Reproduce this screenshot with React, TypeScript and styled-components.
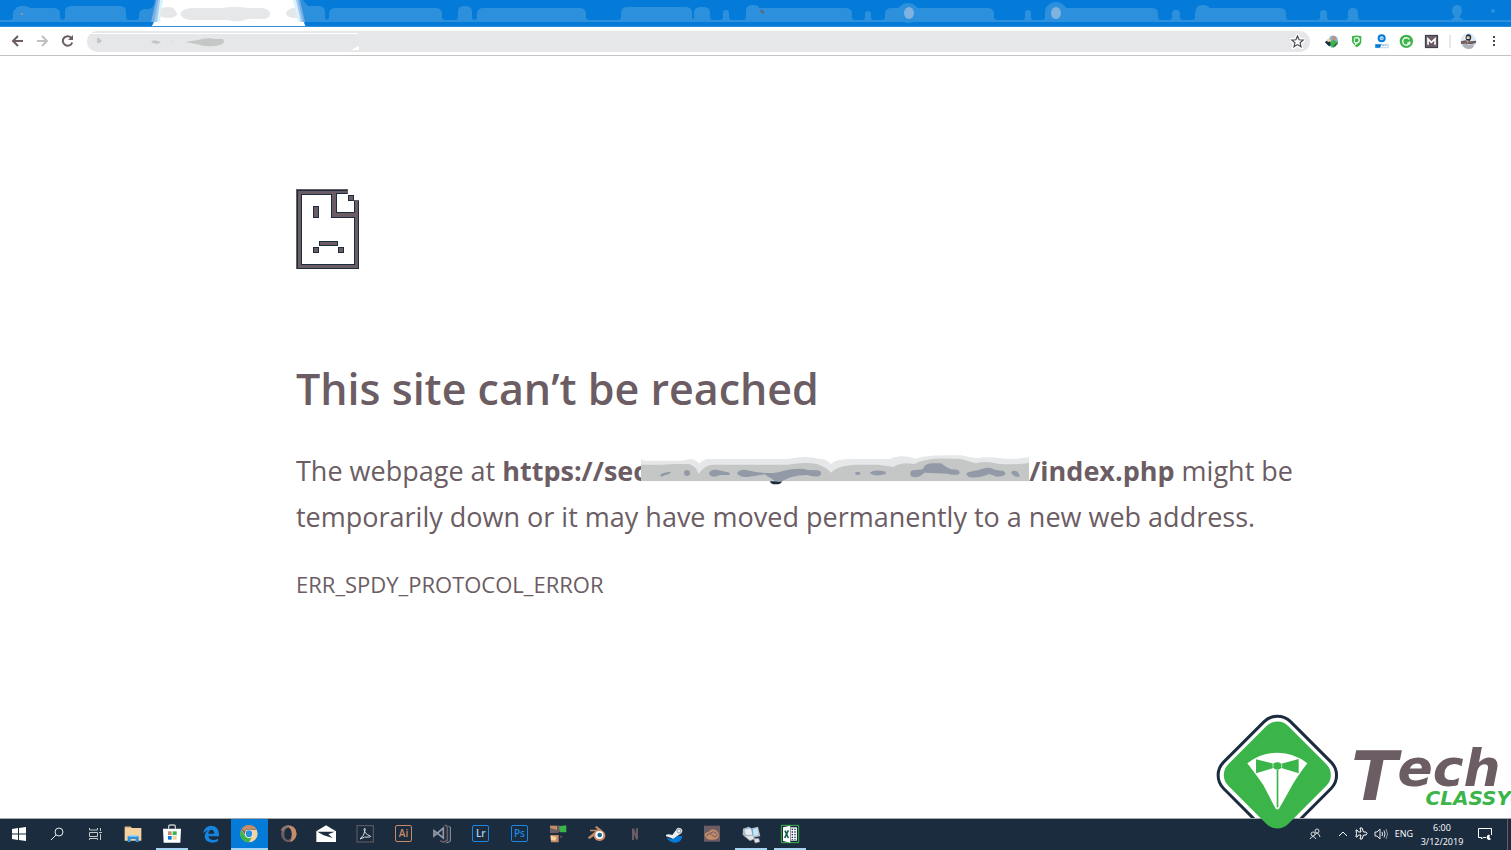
import React from 'react';
import styled, { createGlobalStyle } from 'styled-components';

const c = {
  blue: '#047bd9',
  blueSoft: '#2d90dc',
  navy: '#1b2c3f',
  brown: '#6b5d63',
  green: '#3bb54a',
  grey: '#e6e7e9',
  greyMid: '#c5c7c6',
  slate: '#929aa8',
  tan: '#c48c68',
  cream: '#f5d3a0',
  ice: '#a8d4f4',
};

const GlobalStyle = createGlobalStyle`
  *, *::before, *::after { box-sizing: border-box; }
  body { margin: 0; background: #fff; font-family: "Open Sans", "Noto Sans", sans-serif; color: ${c.brown}; }
  button { border: 0; padding: 0; background: none; font: inherit; color: inherit; }
  svg { display: block; }
`;

const Desktop = styled.div`
  position: relative;
  min-height: 100vh;
  display: flex;
  flex-direction: column;
  overflow: hidden;
`;

/* ---------- tab strip ---------- */

const TabStrip = styled.div`
  display: flex;
  height: 27px;
  background: ${c.blue};
  border-bottom: 1px solid ${c.blueSoft};
  overflow: hidden;
`;

const Tab = styled.button<{ $width: number; $active?: boolean }>`
  flex: 0 0 ${p => p.$width}px;
  height: 27px;
  position: ${p => (p.$active ? 'relative' : 'static')};
`;

const WindowControls = styled.div`
  flex: 1;
  display: flex;
  justify-content: flex-end;
  background: linear-gradient(${c.blueSoft}, ${c.blueSoft}) 0 20px / 100% 2px no-repeat;
`;

type Bump = [number, number, number];

const bumpPath = ([a, b, top]: Bump) => {
  const r = Math.min(6, (b - a) / 2);
  return `M${a - 3} 22V20Q${a} 20 ${a} 17V${top + r}Q${a} ${top} ${a + r} ${top}H${b - r}Q${b} ${top} ${b} ${top + r}V17Q${b} 20 ${b + 3} 20V22Z`;
};

interface SmudgeProps {
  from: number;
  width: number;
  bumps: Bump[];
  children?: React.ReactNode;
}

const Smudge = ({ from, width, bumps, children }: SmudgeProps) => (
  <svg width={width} height="27" viewBox={`${from} 0 ${width} 27`} aria-hidden="true">
    <g fill={c.blueSoft}>
      <rect x={from} y="20" width={width} height="2" />
      {bumps.map(b => (
        <path key={b[0]} d={bumpPath(b)} />
      ))}
    </g>
    {children}
  </svg>
);

const ActiveTabArt = () => (
  <svg width="164" height="27" viewBox="148 0 164 27" aria-hidden="true">
    <path d="M148 22V9Q154 9 155 0H163L160 22ZM293 0H303L308 6L312 6V22H297Z" fill={c.blueSoft} />
    <path d="M156 0H300L305 22H308V22H304Q304 26 307 27H150Q153 26 154 22H151Z" fill="#76aee2" />
    <path d="M158 0H298L303 22H304Q304 26 307 27H150Q153 26 154 22Z" fill="#a3c5ef" />
    <path d="M160 0H296L301 22H157Z" fill="#d5f5fc" />
    <path d="M163 0H293L298 22H304Q304 26 307 27H150Q153 26 154 22H160Z" fill="#fff" />
    <g fill={c.grey}>
      <path d="M161 9Q163 7 168 7Q174 7 176 12Q178 13 177 15Q174 18 168 18Q163 18 160 16Z" />
      <path d="M180 14Q183 8 192 8H222Q235 6 248 8H262Q270 9 270 14Q270 19 262 19H248Q238 23 228 20H192Q183 20 180 14Z" />
      <path d="M286 13Q288 8 295 8L298 18Q287 19 286 13Z" />
    </g>
  </svg>
);

/* ---------- toolbar ---------- */

const Toolbar = styled.div`
  display: flex;
  align-items: center;
  height: 29px;
  padding: 0 5px;
  border-bottom: 1px solid #c3c3c5;
  background: #fff;
`;

const ToolButton = styled.button`
  flex: 0 0 25px;
  height: 25px;
  display: grid;
  place-items: center;
`;

const Omnibox = styled.div`
  flex: 1;
  display: flex;
  align-items: center;
  height: 21px;
  margin: 0 9px 0 7px;
  border-radius: 10px;
  background: ${c.grey};
`;

const AddressArt = styled.svg`
  flex: none;
`;

const Address = styled.input`
  flex: 1;
  min-width: 0;
  height: 21px;
  border: 0;
  outline: 0;
  background: transparent;
  font: 12px "Open Sans", sans-serif;
`;

const Divider = styled.span`
  width: 2px;
  height: 13px;
  margin: 0 5px;
  background: ${c.grey};
`;

const extensions = [
  {
    name: 'Download manager',
    art: (
      <>
        <path d="M3 24L18 11L31 25L18 38Z" fill={c.blueSoft} />
        <path d="M17 8Q28 1 38 9Q45 18 40 29L24 25Z" fill="#8fb6cf" />
        <path d="M26 6L37 11L31 20L24 15Z" fill={c.tan} />
        <path d="M3 25L14 18L24 28L15 37Z" fill={c.navy} />
        <path d="M18 23L29 18L41 24L33 38L22 41Z" fill={c.green} />
        <path d="M7 18L17 13L22 22L12 24Z" fill={c.cream} />
        <path d="M31 33L42 23L40 32L27 42Z" fill={c.navy} opacity=".65" />
      </>
    ),
  },
  {
    name: 'Privacy',
    art: (
      <>
        <path d="M9 7Q23 2 37 7V23Q36 34 22 40L17 33Q9 29 9 22Z" fill={c.green} />
        <path d="M16 13Q29 7 31 18Q31 27 20 27V33" fill="none" stroke="#fff" strokeWidth="4" />
        <path d="M16 14V27" stroke="#fff" strokeWidth="3" />
      </>
    ),
  },
  {
    name: 'Search rank',
    art: (
      <>
        <circle cx="23" cy="13" r="12" fill={c.blue} />
        <circle cx="23" cy="13" r="6" fill="#c8e3f7" />
        <path d="M20 14H27" stroke={c.blue} strokeWidth="2" />
        <path d="M4 31H43V41H4Z" fill="#fff" stroke="#9dc4ec" strokeWidth="2" />
        <path d="M4 31H23L18 41H4Z" fill={c.blue} />
        <path d="M25 35H40" stroke={c.slate} strokeWidth="3" strokeDasharray="5 2" />
      </>
    ),
  },
  {
    name: 'Grammar',
    art: (
      <>
        <circle cx="22" cy="22" r="20" fill={c.green} />
        <path d="M31 16A11 11 0 1 0 32 27H25" fill="none" stroke="#fff" strokeWidth="4" />
        <path d="M32 22V32" stroke="#fff" strokeWidth="3" />
      </>
    ),
  },
  {
    name: 'Metrics',
    art: (
      <>
        <path d="M3 3H42V42H3Z" fill={c.brown} />
        <path d="M4 4H41V41H4Z" fill="none" stroke={c.navy} strokeWidth="2" />
        <path d="M12 32V15L22 25L33 15V32" fill="none" stroke="#fff" strokeWidth="5" />
      </>
    ),
  },
];

/* ---------- error page ---------- */

const Page = styled.main`
  flex: 1;
  padding: 133px 24px 0 296px;
`;

const Message = styled.article`
  max-width: 1020px;
`;

const Title = styled.h1`
  margin: 89px 0 0;
  font-size: 43px;
  line-height: 60px;
  font-weight: 600;
`;

const Detail = styled.p`
  margin: 29px 0 0;
  font-size: 27px;
  line-height: 46px;
`;

const Url = styled.strong`
  font-weight: 700;
  white-space: nowrap;
`;

const Redacted = styled.svg`
  display: inline-block;
  vertical-align: -6px;
  margin-left: -6px;
  position: relative;
`;

const ErrorCode = styled.p`
  margin: 27px 0 0;
  font-size: 22px;
  line-height: 34px;
`;

const SadPage = () => (
  <svg width="64" height="81" viewBox="0 0 64 81" role="img" aria-label="Page error" shapeRendering="crispEdges">
    <path
      fillRule="evenodd"
      fill={c.brown}
      d="M0 0H52V5H40V23H58V11H63V80H0ZM5 5V75H58V28H35V5Z"
    />
    <path d="M5 5H35V28H58V75H5ZM51 4H40V23H58V12" fill="none" stroke={c.navy} strokeWidth="1" />
    <path d="M1 1H51M1 79H62V12M1 1V79" fill="none" stroke={c.navy} strokeWidth="1" />
    <g fill={c.brown} stroke={c.navy} strokeWidth="1">
      <path d="M52 6H57V11H52ZM17 17H22V28H17ZM23 52H41V56H23ZM17 58H22V63H17ZM42 58H47V63H42Z" />
    </g>
  </svg>
);

const RedactedHost = () => (
  <Redacted width="388" height="32" viewBox="0 0 1164 96" role="img" aria-label="hidden host name">
    <path d="M385 76Q388 86 396 88H412Q422 86 424 76Z" fill={c.navy} />
    <path d="M0 12L10 17H120L150 12Q165 14 175 26Q188 12 200 12H440Q495 0 535 11Q558 12 570 27Q585 12 630 12H748Q775 -4 825 11Q850 -2 960 1Q985 7 1010 10Q1040 3 1080 10Q1120 16 1164 5V79H0Z" fill={c.grey} />
    <path d="M0 29H60L100 27H145Q165 33 173 57Q190 29 220 29H440Q495 19 530 28Q556 37 570 53Q590 30 650 29H710Q735 32 757 36Q780 20 820 27Q855 5 960 12Q985 20 1005 25Q1035 16 1070 26Q1120 31 1164 23V78H0Z" fill={c.greyMid} />
    <g fill={c.slate}>
      <path d="M57 60Q62 53 90 50Q86 58 73 60L62 65Z" />
      <circle cx="138" cy="54" r="9" />
      <path d="M204 55Q208 42 230 45L266 53V60L238 60Q210 73 204 55ZM288 55Q296 39 325 47L350 52Q400 58 425 48Q475 36 500 45L530 46Q549 52 534 64Q510 65 500 60Q445 62 430 76Q410 88 392 71L370 58L325 65Q298 70 288 55Z" />
      <ellipse cx="650" cy="55" rx="8" ry="5" />
      <path d="M686 54Q700 42 734 50V57Q700 67 686 54ZM808 56Q808 43 824 45L845 43Q853 25 870 25H900Q915 37 930 43Q960 43 955 56Q945 63 920 56L850 53Q830 73 810 64ZM975 56Q988 48 1010 46Q1045 32 1060 44L1087 48Q1100 56 1086 63L1068 65L1045 57Q1005 73 982 65ZM1110 52Q1115 44 1130 50L1137 64Q1120 70 1110 52Z" />
    </g>
  </Redacted>
);

/* ---------- brand ---------- */

const Brand = styled.div`
  position: absolute;
  right: 0;
  bottom: 20px;
  z-index: 2;
  display: flex;
  align-items: flex-end;
  gap: 12px;
`;

const Wordmark = styled.div`
  width: 160px;
  height: 86px;
  display: flex;
  flex-direction: column;
  font-family: "DejaVu Sans", sans-serif;
  font-weight: 700;
  font-style: italic;
`;

const Tech = styled.span`
  display: flex;
  align-items: flex-start;
  height: 46px;
  font-size: 52px;
  line-height: 48px;
  color: ${c.brown};
`;

const Initial = styled.span`
  font-size: 68px;
  line-height: 65px;
`;

const Classy = styled.span`
  align-self: flex-end;
  font-size: 20px;
  line-height: 16px;
  color: ${c.green};
`;

const BrandMark = () => (
  <svg width="123" height="117" viewBox="48 39 369 351" role="img" aria-label="Tech Classy emblem">
    <clipPath id="aboveBar">
      <path d="M0 0H933V354H0Z" />
    </clipPath>
    <g clipPath="url(#aboveBar)">
      <rect x="90" y="84" width="284" height="284" rx="56" transform="rotate(45 232 226)" fill="#fff" stroke={c.navy} strokeWidth="9" />
    </g>
    <rect x="105" y="98" width="254" height="254" rx="46" transform="rotate(45 232 225)" fill={c.green} />
    <path d="M142 190Q180 158 232 158Q284 158 322 190Q295 225 277 255Q258 290 236 328H228Q208 290 190 255Q169 225 142 190Z" fill="#fff" />
    <path d="M168 178L220 191Q232 183 244 191L296 177V220L244 204Q232 214 220 204L168 220Z" fill={c.green} />
    <path d="M230 210H235V322H230Z" fill={c.green} />
    <path d="M219 192V203M245 192V203" stroke="#fff" strokeWidth="2" />
  </svg>
);

/* ---------- taskbar ---------- */

const Taskbar = styled.footer`
  display: flex;
  justify-content: space-between;
  height: 32px;
  border-top: 1px solid #a4a8ad;
  background: ${c.navy};
  color: #fff;
`;

const Launchers = styled.nav`
  display: flex;
`;

const SystemButton = styled.button`
  width: 38px;
  height: 31px;
  padding-bottom: 2px;
  display: grid;
  place-items: center;
`;

const Pinned = styled.div`
  width: 695px;
  display: grid;
  grid-template-columns: repeat(18, 1fr);
`;

const AppButton = styled.button<{ $open?: boolean; $current?: boolean }>`
  height: 31px;
  padding-bottom: 2px;
  display: grid;
  place-items: center;
  background:
    linear-gradient(${p => (p.$open ? c.ice : 'transparent')} 0 0) center bottom / ${p => (p.$current ? '37px' : '32px')} 2px no-repeat,
    linear-gradient(${p => (p.$current ? c.blue : 'transparent')} 0 0) center 0 / 37px 29px no-repeat;
`;

const AdobeTile = styled.span<{ $tone: string; $ink?: string }>`
  width: 17px;
  height: 17px;
  border: 1px solid ${p => p.$tone};
  border-radius: 2px;
  font-size: 10px;
  font-weight: 600;
  line-height: 15px;
  text-align: center;
  color: ${p => p.$ink ?? p.$tone};
`;

const Tray = styled.div`
  display: flex;
  align-items: center;
  font-size: 9px;
  padding-right: 3px;
`;

const TrayButton = styled.button<{ $width: number }>`
  width: ${p => p.$width}px;
  height: 31px;
  padding-bottom: 2px;
  display: grid;
  place-items: center;
`;

const Clock = styled.button`
  width: 50px;
  line-height: 14px;
  text-align: center;
`;

const ShowDesktop = styled.button`
  width: 1px;
  height: 31px;
  margin-left: 4px;
  background: ${c.brown};
`;

const Icon = ({ children }: { children: React.ReactNode }) => (
  <svg width="24" height="24" viewBox="0 0 72 72" fill="none" aria-hidden="true">
    {children}
  </svg>
);

const apps: { name: string; open?: boolean; current?: boolean; art: React.ReactNode }[] = [
  {
    name: 'File Explorer',
    art: (
      <Icon>
        <path d="M11 14H29L33 18H61V56H11Z" fill={c.cream} />
        <path d="M13 15H29" stroke={c.tan} strokeWidth="3" />
        <path d="M20 60V42H53V60H44V51H29V60Z" fill={c.blueSoft} />
        <path d="M23 39H50V44H23Z" fill={c.ice} />
      </Icon>
    ),
  },
  {
    name: 'Store',
    open: true,
    art: (
      <Icon>
        <path d="M26 20V13Q26 9 31 9H41Q46 9 46 13V20" stroke={c.greyMid} strokeWidth="4" />
        <path d="M9 20H63L61 62H11Z" fill="#fff" />
        <path d="M24 28H35V39H24Z" fill={c.tan} />
        <path d="M38 28H50V39H38Z" fill={c.green} />
        <path d="M24 42H35V53H24Z" fill={c.blue} />
        <path d="M38 42H50V53H38Z" fill={c.cream} />
      </Icon>
    ),
  },
  {
    name: 'Edge',
    art: (
      <Icon>
        <path d="M12 34Q17 11 37 11Q60 12 60 38V43H28Q30 54 43 54Q51 54 57 50V58Q49 62 40 62Q17 61 17 43Q17 31 30 24Q20 26 12 34ZM28 35H46Q45 23 37 23Q29 25 28 35Z" fill="#1585e0" />
      </Icon>
    ),
  },
  {
    name: 'Chrome',
    open: true,
    current: true,
    art: (
      <Icon>
        <circle cx="36" cy="35" r="26" fill={c.cream} />
        <path d="M13 23A26 26 0 0 1 59 23H36A13 13 0 0 0 25 39Z" fill={c.brown} />
        <path d="M14 21A26 26 0 0 1 58 21H36A14 14 0 0 0 24 29Z" fill={c.tan} />
        <path d="M12 24A26 26 0 0 0 36 61L45 45A13 13 0 0 1 25 42Z" fill={c.green} />
        <circle cx="36" cy="35" r="12" fill="#fff" />
        <circle cx="36" cy="35" r="10" fill={c.blueSoft} />
      </Icon>
    ),
  },
  {
    name: 'Opera',
    art: (
      <Icon>
        <path d="M36 10A26 26 0 0 0 36 61A26 26 0 0 0 36 10M36 17Q47 20 47 36Q47 52 36 54Q25 52 25 36Q25 20 36 17Z" fill={c.brown} fillRule="evenodd" />
        <path d="M32 10Q62 10 62 37Q60 54 42 61Q48 52 48 36Q48 20 32 10Z" fill={c.tan} />
        <path d="M14 25Q20 11 36 10V17Q25 17 23 29Z" fill="#8d7771" />
      </Icon>
    ),
  },
  {
    name: 'Mail',
    art: (
      <Icon>
        <path d="M7 28L36 10L66 28V60H7Z" fill="#fff" />
        <path d="M10 29H62L43 37L56 48L29 40Z" fill={c.navy} />
      </Icon>
    ),
  },
  {
    name: 'Acrobat',
    art: (
      <Icon>
        <rect x="12" y="11" width="49" height="49" stroke={c.brown} strokeWidth="3" />
        <path d="M21 51Q34 42 37 22Q37 17 33 21Q34 36 52 42Q56 44 49 45Q34 43 21 51Z" stroke="#d8d9db" strokeWidth="3" />
      </Icon>
    ),
  },
  { name: 'Illustrator', art: <AdobeTile $tone={c.tan}>Ai</AdobeTile> },
  {
    name: 'Visual Studio',
    art: (
      <Icon>
        <path d="M12 26L40 48V18L12 42Z" stroke={c.slate} strokeWidth="5" />
        <path d="M44 9L52 13V55L42 60L30 57" stroke={c.brown} strokeWidth="5" />
        <path d="M56 13L61 15V58L49 63" stroke={c.slate} strokeWidth="3" />
      </Icon>
    ),
  },
  { name: 'Lightroom', art: <AdobeTile $tone="#1a88e4" $ink={c.ice}>Lr</AdobeTile> },
  { name: 'Photoshop', art: <AdobeTile $tone="#1a88e4">Ps</AdobeTile> },
  {
    name: 'Launcher',
    art: (
      <Icon>
        <path d="M12 11H34V33H12Z" fill={c.tan} />
        <path d="M12 18L34 24V33H12Z" fill={c.brown} />
        <path d="M34 11H42V29L34 34Z" fill={c.brown} />
        <path d="M39 13L61 10V31H43Z" fill={c.green} />
        <path d="M13 39H38V61H15Z" fill={c.tan} />
        <path d="M14 41L32 45L28 56L15 54Z" fill={c.cream} />
        <path d="M42 43H48L44 49" stroke={c.brown} strokeWidth="3" />
      </Icon>
    ),
  },
  {
    name: 'Blender',
    art: (
      <Icon>
        <path d="M8 47L31 28H15V23H38L30 15L35 12Q47 21 57 30Q65 39 58 50Q47 62 32 53Q27 48 26 43L13 51Z" fill={c.tan} />
        <circle cx="43" cy="39" r="12" fill="#fff" />
        <circle cx="44" cy="39" r="7" fill="#156597" />
      </Icon>
    ),
  },
  {
    name: 'Notes',
    art: (
      <Icon>
        <path d="M30 54V20L42 52V19" stroke={c.brown} strokeWidth="6" />
      </Icon>
    ),
  },
  {
    name: 'Steam',
    art: (
      <Icon>
        <path d="M14 48Q36 54 44 43L61 42Q59 62 38 62Q23 61 14 48Z" fill={c.blue} />
        <path d="M12 39Q17 34 31 39L42 24Q46 14 56 19Q65 25 58 34L40 46Q35 53 28 48L12 43Z" fill="#edf0f3" />
        <circle cx="51" cy="27" r="6" stroke={c.slate} strokeWidth="3" />
      </Icon>
    ),
  },
  {
    name: 'Creative Cloud',
    art: (
      <Icon>
        <path d="M12 11H60V59H12Z" fill={c.brown} />
        <path d="M15 43Q12 31 25 30Q36 15 51 27Q61 37 54 48Q42 58 20 50Z" fill={c.tan} />
        <path d="M21 43Q20 33 33 36L45 45Q55 43 49 34Q40 25 31 33" stroke={c.brown} strokeWidth="3" />
      </Icon>
    ),
  },
  {
    name: 'Remote tools',
    open: true,
    art: (
      <Icon>
        <path d="M12 20L29 14L38 19L57 14L64 43L48 46L31 52L11 39Z" fill="#b2bcc7" />
        <path d="M17 24L35 19L40 40L21 38Z" fill="#e5edf3" />
        <path d="M39 23L56 18L58 38L43 42Z" fill="#cce4f5" />
        <path d="M16 42L41 39L47 50L33 56ZM44 51L59 49L62 59L49 63Z" fill="#dfe3e6" stroke={c.slate} strokeWidth="2" />
        <path d="M32 17L40 22L42 38" stroke={c.blueSoft} strokeWidth="2" />
      </Icon>
    ),
  },
  {
    name: 'Excel',
    open: true,
    art: (
      <Icon>
        <path d="M10 10H62V62H10Z" stroke={c.green} strokeWidth="3" />
        <path d="M15 16L37 11V62L15 57Z" fill="#fff" />
        <path d="M38 16H57V56H38Z" fill="#f1f4f5" />
        <path d="M21 26L31 48M31 25L20 48" stroke="#165f4f" strokeWidth="5" />
        <path d="M43 20V54M51 20V54" stroke={c.navy} strokeWidth="4" strokeDasharray="4 4" />
      </Icon>
    ),
  },
];

export default function App() {
  return (
    <Desktop>
      <GlobalStyle />
      <TabStrip role="tablist" aria-label="Open tabs">
        <Tab role="tab" $width={148} aria-label="Tab 1">
          <Smudge from={0} width={148} bumps={[[13, 60, 8], [15, 31, 6], [65, 126, 6], [139, 156, 9]]}>
            <rect x="21" y="13" width="2" height="2" fill={c.slate} />
          </Smudge>
        </Tab>
        <Tab role="tab" aria-selected="true" $width={164} $active aria-label="Current tab">
          <ActiveTabArt />
        </Tab>
        <Tab role="tab" $width={139} aria-label="Tab 3">
          <Smudge from={312} width={139} bumps={[[305, 325, 6], [329, 442, 8]]} />
        </Tab>
        <Tab role="tab" $width={147} aria-label="Tab 4">
          <Smudge from={451} width={147} bumps={[[458, 472, 6], [477, 586, 8]]} />
        </Tab>
        <Tab role="tab" $width={144} aria-label="Tab 5">
          <Smudge from={598} width={144} bumps={[[621, 692, 7], [694, 710, 7], [723, 729, 10]]} />
        </Tab>
        <Tab role="tab" $width={138} aria-label="Tab 6">
          <Smudge from={742} width={138} bumps={[[746, 760, 5], [750, 852, 8], [865, 871, 11]]}>
            <path d="M760 10H762L764 12V14L761 12Z" fill={c.brown} />
          </Smudge>
        </Tab>
        <Tab role="tab" $width={160} aria-label="Tab 7">
          <Smudge from={880} width={160} bumps={[[885, 994, 8], [1025, 1031, 10]]}>
            <ellipse cx="895" cy="14" rx="10" ry="6" fill={c.blueSoft} />
            <ellipse cx="908" cy="13" rx="11" ry="10" fill={c.blueSoft} />
            <ellipse cx="909" cy="13" rx="5" ry="6" fill="#80b2df" />
          </Smudge>
        </Tab>
        <Tab role="tab" $width={148} aria-label="Tab 8">
          <Smudge from={1040} width={148} bumps={[[1045, 1158, 8], [1172, 1180, 10]]}>
            <ellipse cx="1056" cy="12" rx="11" ry="10" fill={c.blueSoft} />
            <ellipse cx="1056" cy="13" rx="5" ry="6" fill="#80b2df" />
          </Smudge>
        </Tab>
        <Tab role="tab" $width={180} aria-label="Tab 9">
          <Smudge from={1188} width={180} bumps={[[1195, 1286, 8], [1196, 1210, 5], [1320, 1327, 10], [1348, 1358, 8]]} />
        </Tab>
        <WindowControls>
          <svg width="143" height="27" viewBox="1368 0 143 27" aria-hidden="true">
            <path d="M1452 11Q1452 5 1457 5Q1462 5 1462 11Q1462 14 1459 17L1464 20H1450L1455 17Q1452 14 1452 11Z" fill={c.blueSoft} />
            <circle cx="1493" cy="11" r="2" fill={c.blueSoft} />
          </svg>
        </WindowControls>
      </TabStrip>

      <Toolbar>
        <ToolButton aria-label="Back">
          <svg width="13" height="13" viewBox="0 0 13 13" fill="none" stroke={c.brown} strokeWidth="2">
            <path d="M12 6H2M7 1L2 6L7 11" />
          </svg>
        </ToolButton>
        <ToolButton aria-label="Forward">
          <svg width="13" height="13" viewBox="0 0 13 13" fill="none" stroke="#bfc0c2" strokeWidth="2">
            <path d="M1 6H11M6 1L11 6L6 11" />
          </svg>
        </ToolButton>
        <ToolButton aria-label="Reload">
          <svg width="13" height="13" viewBox="0 0 13 13" fill="none">
            <path d="M10 2.500A4.800 4.800 0 1 0 11.200 7.500" stroke={c.brown} strokeWidth="2" />
            <path d="M12 0V5H7Z" fill={c.brown} />
          </svg>
        </ToolButton>
        <Omnibox>
          <AddressArt width="273" height="21" viewBox="0 0 273 21" aria-hidden="true">
            <path d="M2 2.500H271" stroke="#fff" />
            <path d="M264 19L268 17L272 15V19Z" fill="#fff" />
            <g fill={c.greyMid}>
              <path d="M10 7L12 7L15 10L13 12H10Z" />
              <path d="M64 11Q66 8 71 10L74 11L71 13Q67 13 64 11ZM98 11L111 9Q119 6 128 8H136Q139 12 133 14Q121 17 109 13Z" />
              <circle cx="85" cy="11" r=".6" />
            </g>
          </AddressArt>
          <Address aria-label="Address" />
          <ToolButton aria-label="Bookmark this page">
            <svg width="15" height="15" viewBox="0 0 15 15">
              <path d="M7.500 2L9.100 5.800L13.200 6.100L10.100 8.800L11 12.800L7.500 10.600L4 12.800L4.900 8.800L1.800 6.100L5.900 5.800Z" fill="#fff" stroke="#fff" strokeWidth="4" />
              <path d="M7.500 2L9.100 5.800L13.200 6.100L10.100 8.800L11 12.800L7.500 10.600L4 12.800L4.900 8.800L1.800 6.100L5.900 5.800Z" fill="#fff" stroke="#4b4650" strokeWidth="1.200" />
            </svg>
          </ToolButton>
        </Omnibox>
        {extensions.map(e => (
          <ToolButton key={e.name} aria-label={e.name}>
            <svg width="15" height="15" viewBox="0 0 45 45">{e.art}</svg>
          </ToolButton>
        ))}
        <Divider />
        <ToolButton aria-label="Profile">
          <svg width="17" height="17" viewBox="0 0 51 51">
            <circle cx="25" cy="25" r="24" fill="#dcebf4" />
            <path d="M17 16Q16 3 27 4Q36 6 33 18L29 24L19 22Z" fill={c.navy} />
            <path d="M20 10H29V18H20Z" fill={c.cream} />
            <path d="M3 25L17 22L31 25L48 23V30L33 34L15 32L3 33Z" fill={c.brown} />
            <path d="M7 34Q17 29 26 36L42 33L38 44Q25 53 12 43Z" fill="#adb1b7" />
            <path d="M18 24L22 31L29 24" fill={c.tan} />
          </svg>
        </ToolButton>
        <ToolButton aria-label="Menu">
          <svg width="4" height="12" viewBox="0 0 4 12" fill="#4b4650">
            <path d="M1 1H3V3H1ZM1 5H3V7H1ZM1 9H3V11H1Z" />
          </svg>
        </ToolButton>
      </Toolbar>

      <Page>
        <Message>
          <SadPage />
          <Title>This site can’t be reached</Title>
          <Detail>
            The webpage at{' '}
            <Url>
              https://sec
              <RedactedHost />
              /index.php
            </Url>{' '}
            might be
            <br />
            temporarily down or it may have moved permanently to a new web address.
          </Detail>
          <ErrorCode>ERR_SPDY_PROTOCOL_ERROR</ErrorCode>
        </Message>
      </Page>

      <Brand>
        <BrandMark />
        <Wordmark>
          <Tech>
            <Initial>T</Initial>ech
          </Tech>
          <Classy>CLASSY</Classy>
        </Wordmark>
      </Brand>

      <Taskbar>
        <Launchers aria-label="Taskbar">
          <SystemButton aria-label="Start">
            <svg width="14" height="14" viewBox="0 0 14 14" fill="#fff">
              <path d="M0 2L6 1V6.500H0ZM7 1L14 0V6.500H7ZM0 7.500H6V13L0 12ZM7 7.500H14V14L7 13Z" />
            </svg>
          </SystemButton>
          <SystemButton aria-label="Search">
            <svg width="14" height="14" viewBox="0 0 14 14" fill="none" stroke="#e6e7e9">
              <circle cx="9" cy="5" r="4" />
              <path d="M6 8L1 13" />
            </svg>
          </SystemButton>
          <SystemButton aria-label="Task view">
            <svg width="14" height="14" viewBox="0 0 14 14" fill="none" stroke="#c5c7c6">
              <path d="M1.500 1V3H9.500V1M1.500 5.500H9.500V9.500H1.500ZM1.500 13V11.500H9.500V13M12.500 1V4M12.500 7V13M11 5.500H14" />
            </svg>
          </SystemButton>
          <Pinned>
            {apps.map(a => (
              <AppButton key={a.name} aria-label={a.name} $open={a.open} $current={a.current}>
                {a.art}
              </AppButton>
            ))}
          </Pinned>
        </Launchers>
        <Tray>
          <TrayButton $width={38} aria-label="People">
            <svg width="12" height="12" viewBox="0 0 12 12" fill="none" stroke="#d8dadd">
              <circle cx="8" cy="3" r="2" />
              <path d="M6 6.500Q8 4 10 6.500L11 9" />
              <circle cx="4" cy="6" r="2" />
              <path d="M1 11Q4 6 7 11" />
            </svg>
          </TrayButton>
          <TrayButton $width={18} aria-label="Show hidden icons">
            <svg width="10" height="6" viewBox="0 0 10 6" fill="none" stroke="#fff">
              <path d="M1 5L5 1L9 5" />
            </svg>
          </TrayButton>
          <TrayButton $width={19} aria-label="Airplane mode">
            <svg width="13" height="13" viewBox="0 0 13 13" fill="none" stroke="#fff">
              <path d="M5 1H7L8.500 5H11Q13 6.500 11 8H8.500L7 12H5L6 8H3.500L2 10H1L1.500 6.500L1 3H2L3.500 5H6Z" />
            </svg>
          </TrayButton>
          <TrayButton $width={20} aria-label="Volume">
            <svg width="14" height="12" viewBox="0 0 14 12" fill="none" stroke="#e6e7e9">
              <path d="M1 4H3L6 1V11L3 8H1ZM8 4Q9 6 8 8M10 2.500Q12 6 10 9.500" />
              <path d="M12 1Q15 6 12 11" stroke={c.slate} />
            </svg>
          </TrayButton>
          <TrayButton $width={26}>ENG</TrayButton>
          <Clock>
            6:00
            <br />
            3/12/2019
          </Clock>
          <TrayButton $width={36} aria-label="Notifications">
            <svg width="14" height="14" viewBox="0 0 14 14" fill="none" stroke="#fff">
              <path d="M8 10.500H5L3.500 12V10.500H.5V1.500H13.500V8" />
              <path d="M12 8A2.500 2.500 0 1 0 13 12A3 3 0 0 1 12 8Z" fill="#fff" stroke="none" />
            </svg>
          </TrayButton>
          <ShowDesktop aria-label="Show desktop" />
        </Tray>
      </Taskbar>
    </Desktop>
  );
}
